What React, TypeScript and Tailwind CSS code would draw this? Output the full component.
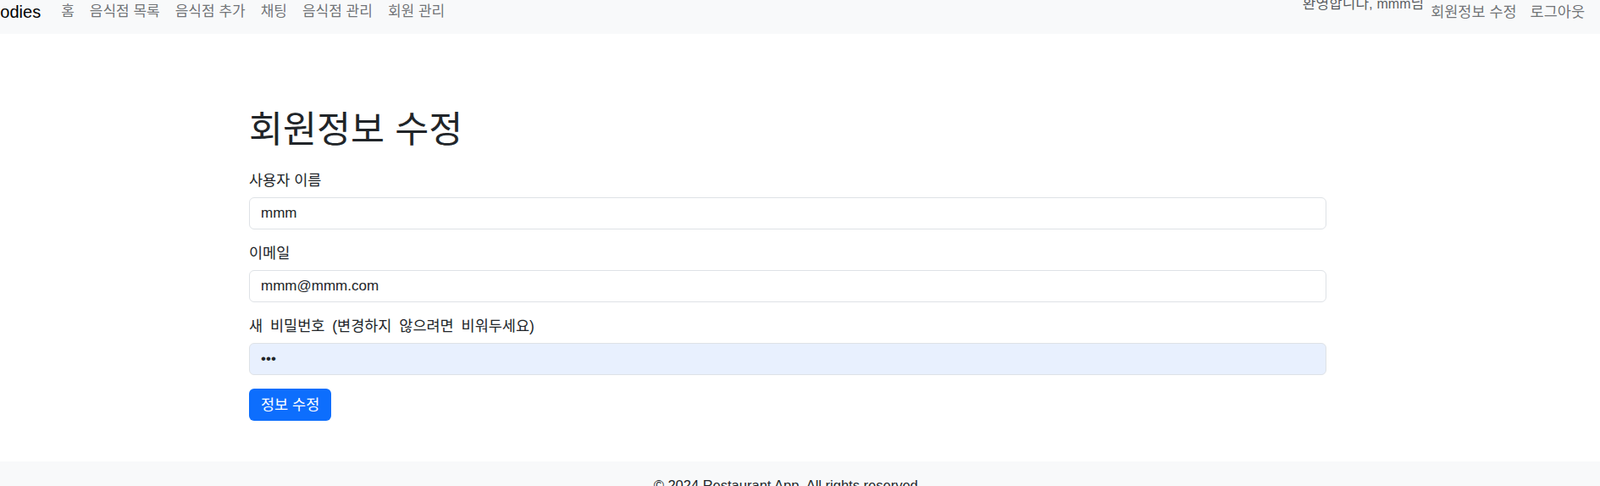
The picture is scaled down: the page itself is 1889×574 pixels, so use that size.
import React from 'react';

const font = { fontFamily: '"Liberation Sans", "Noto Sans CJK KR", sans-serif' };

const leftLinks = ['홈', '음식점 목록', '음식점 추가', '채팅', '음식점 관리', '회원 관리'];

const Navbar = () => {
  return (
    <nav className="h-[40px] bg-[#f8f9fa] flex items-start overflow-hidden">
      <div className="flex items-center h-[28px]">
        <span className="ml-[-23px] mr-[15px] text-[20px] leading-[28px] text-black">Foodies</span>
        {leftLinks.map((l) => (
          <a key={l} className="px-[9px] text-[17px] leading-[28px] text-[rgba(33,37,41,0.65)]">
            {l}
          </a>
        ))}
      </div>
      <div className="ml-auto flex items-center h-[28px] pr-[10px]">
        <span className="mt-[-19px] text-[17px] leading-[24px] text-[rgba(33,37,41,0.75)]">
          환영합니다, <span className="text-[16px]">mmm</span>님
        </span>
        <a className="px-[8px] text-[17.5px] leading-[28px] text-[rgba(33,37,41,0.65)]">회원정보 수정</a>
        <a className="px-[8px] text-[17.5px] leading-[28px] text-[rgba(33,37,41,0.65)]">로그아웃</a>
      </div>
    </nav>
  );
};

type FieldProps = { label: string; value: string; type?: string; filled?: boolean; wide?: boolean };

const Field = ({ label, value, type = 'text', filled = false, wide = false }: FieldProps) => (
  <div className="mb-[16px]">
    <label
      className={`block mb-[8px] text-[17.5px] leading-[24px] text-[#212529] ${wide ? '[word-spacing:4px]' : ''}`}
    >
      {label}
    </label>
    <input
      type={type}
      defaultValue={value}
      readOnly
      style={font}
      className={`block w-full h-[38px] px-[13px] text-[17px] text-[#212529] border border-[#dee2e6] rounded-[6px] outline-none ${
        filled ? 'bg-[#e8f0fe]' : 'bg-white'
      }`}
    />
  </div>
);

export default function App() {
  return (
    <div style={font} className="min-h-[574px] bg-white text-[#212529]">
      <Navbar />
      <main className="ml-[294px] w-[1272px] pt-[89px] pb-[48px]">
        <h1 className="text-[43.5px] leading-[48px] font-normal mb-[24px] text-[#212529]">회원정보 수정</h1>
        <form>
          <Field label="사용자 이름" value="mmm" />
          <Field label="이메일" value="mmm@mmm.com" />
          <Field label="새 비밀번호 (변경하지 않으려면 비워두세요)" value="mmm" type="password" filled wide />
          <button
            type="button"
            className="h-[38px] px-[14px] rounded-[6px] bg-[#0d6efd] text-white text-[17.5px] leading-[24px]"
          >
            정보 수정
          </button>
        </form>
      </main>
      <footer className="bg-[#f8f9fa] py-[16px]">
        <div className="ml-[294px] w-[1272px] text-center">
          <p className="text-[16.5px] leading-[24px] text-[#212529]">© 2024 Restaurant App. All rights reserved.</p>
        </div>
      </footer>
    </div>
  );
}
